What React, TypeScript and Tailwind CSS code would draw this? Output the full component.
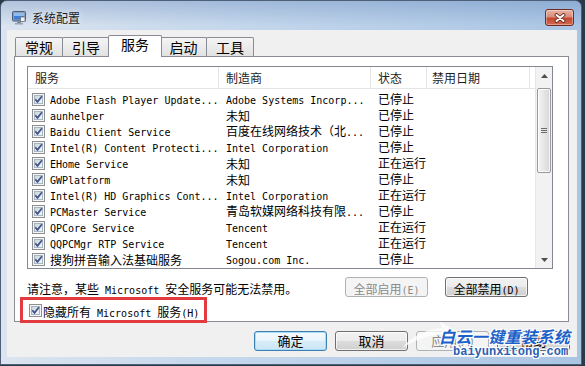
import React from "react";

const ROWS: [string, string, string][] = [
  ["Adobe Flash Player Update...", "Adobe Systems Incorp...", "已停止"],
  ["aunhelper", "未知", "已停止"],
  ["Baidu Client Service", "百度在线网络技术（北...", "已停止"],
  ["Intel(R) Content Protecti...", "Intel Corporation", "已停止"],
  ["EHome Service", "未知", "正在运行"],
  ["GWPlatform", "未知", "已停止"],
  ["Intel(R) HD Graphics Cont...", "Intel Corporation", "正在运行"],
  ["PCMaster Service", "青岛软媒网络科技有限...", "已停止"],
  ["QPCore Service", "Tencent", "正在运行"],
  ["QQPCMgr RTP Service", "Tencent", "正在运行"],
  ["搜狗拼音输入法基础服务", "Sogou.com Inc.", "已停止"],
];

// latin runs in a narrow mono face, CJK runs at 12px
function Mixed({ text }: { text: string }) {
  const parts = text.split(/([\x20-\x7e]+)/).filter(Boolean);
  return (
    <span className="whitespace-pre">
      {parts.map((p, i) =>
        /^[\x20-\x7e]+$/.test(p) ? (
          <span key={i} className="font-['DejaVu_Sans_Mono',monospace] text-[10px]">
            {p}
          </span>
        ) : (
          <span key={i} className="text-[12px]">
            {p}
          </span>
        )
      )}
    </span>
  );
}

function Check() {
  return (
    <svg width="13" height="13" viewBox="0 0 13 13" className="shrink-0">
      <defs>
        <linearGradient id="cbg" x1="0" y1="0" x2="1" y2="1">
          <stop offset="0" stopColor="#c9d2de" />
          <stop offset="1" stopColor="#f6f8fb" />
        </linearGradient>
      </defs>
      <rect x="0.5" y="0.5" width="12" height="12" fill="#f6f6f6" stroke="#8e8f8f" />
      <rect x="2.5" y="2.5" width="8" height="8" fill="url(#cbg)" stroke="#a9b4c2" />
      <path d="M3.3 6.3 L5.5 8.9 L9.9 3.3" fill="none" stroke="#3d5289" strokeWidth="1.7" />
    </svg>
  );
}

function ScrollBar() {
  return (
    <div className="w-[17px] flex flex-col bg-[#f2f2f2] border-l border-[#e6e6e6]">
      <div className="h-[17px] flex items-center justify-center">
        <svg width="7" height="4" viewBox="0 0 7 4">
          <path d="M0 4 L3.5 0 L7 4 Z" fill="#4f4f4f" />
        </svg>
      </div>
      <div className="flex-1 pt-[4px] px-[1px] flex flex-col">
        <div className="h-[85px] rounded-[2px] border border-[#999] bg-[linear-gradient(to_right,#f4f4f4,#e6e6e6_50%,#d6d6d6)] shadow-[inset_0_0_0_1px_rgba(255,255,255,0.8)] flex flex-col items-center justify-center gap-[1px]">
          <div className="w-[6px] h-px bg-[#6b6b6b]" />
          <div className="w-[6px] h-px bg-[#6b6b6b]" />
          <div className="w-[6px] h-px bg-[#6b6b6b]" />
        </div>
      </div>
      <div className="h-[17px] flex items-center justify-center">
        <svg width="7" height="4" viewBox="0 0 7 4">
          <path d="M0 0 L3.5 4 L7 0 Z" fill="#4f4f4f" />
        </svg>
      </div>
    </div>
  );
}

function ServiceList() {
  return (
    <div className="h-[203px] shrink-0 border border-[#828790] bg-white flex">
      <div className="flex-1 flex flex-col min-w-0 overflow-hidden">
        <div className="h-[22px] shrink-0 flex border-b border-[#e5e5e5] text-[12px] text-[#1e1e1e]">
          <div className="w-[191px] pl-[7px] flex items-center border-r border-[#e5e5e5]">服务</div>
          <div className="w-[152px] pl-[7px] flex items-center border-r border-[#e5e5e5]">制造商</div>
          <div className="w-[56px] pl-[7px] flex items-center border-r border-[#e5e5e5]">状态</div>
          <div className="w-[103px] pl-[5px] flex items-center border-r border-[#e5e5e5]">禁用日期</div>
        </div>
        <div className="pt-[2px] flex flex-col">
          {ROWS.map(([name, maker, state]) => (
            <div key={name} className="h-[16px] flex items-center leading-[16px] text-black">
              <div className="w-[191px] pl-[4px] flex items-center gap-[5px] overflow-hidden whitespace-nowrap">
                <Check />
                <Mixed text={name} />
              </div>
              <div className="w-[152px] pl-[7px] overflow-hidden whitespace-nowrap">
                <Mixed text={maker} />
              </div>
              <div className="w-[56px] pl-[7px] text-[12px] whitespace-nowrap">{state}</div>
            </div>
          ))}
        </div>
      </div>
      <ScrollBar />
    </div>
  );
}

const BTN =
  "h-[20px] rounded-[3px] border border-[#707070] bg-[linear-gradient(to_bottom,#f2f2f2_0%,#ebebeb_50%,#dddddd_50%,#cfcfcf_100%)] shadow-[inset_0_0_0_1px_rgba(255,255,255,0.7)] flex items-center justify-center text-black";
const BTN_OFF =
  "h-[20px] rounded-[3px] border border-[#adb2b5] bg-[#f4f4f4] flex items-center justify-center text-[#8a8a8a]";

export default function App() {
  return (
    <div className="relative w-[585px] h-[366px] bg-[#2c3a48] overflow-hidden font-['Noto_Sans_CJK_SC',sans-serif]">
      <div className="w-[582px] h-[365px] flex flex-col rounded-t-[7px] border border-[#4d6078] bg-[linear-gradient(to_right,#dbe4ef_0%,#c4d7ec_40%,#aac5e4_100%)]">
        {/* title bar */}
        <div className="h-[29px] shrink-0 flex items-center pt-[4px] pl-[11px] pr-[7px] rounded-t-[6px] bg-[linear-gradient(to_bottom,rgba(70,110,170,0.28),rgba(255,255,255,0)_85%)]">
          <svg width="14" height="14" viewBox="0 0 14 14" className="shrink-0">
            <rect x="0.5" y="0.5" width="13" height="9.5" rx="1" fill="#8da0b8" stroke="#4a5d78" />
            <rect x="2" y="2" width="10" height="6.5" fill="#3d7fd4" />
            <rect x="2" y="2" width="10" height="3" fill="#8dbdf0" />
            <rect x="5" y="10.5" width="4" height="1.5" fill="#7b8796" />
            <rect x="3" y="12" width="8" height="1.5" fill="#9aa6b4" />
            <rect x="8.5" y="6" width="4.5" height="4.5" fill="#f2f2f2" stroke="#6c7480" strokeWidth="0.8" />
          </svg>
          <span className="ml-[6px] text-[12px] text-[#1b1b1b] [text-shadow:0_0_6px_rgba(255,255,255,0.9)]">系统配置</span>
          <div className="ml-auto w-[29px] h-[17px] rounded-[3px] border border-[#6e2c24] bg-[linear-gradient(to_bottom,#eab2a4_0%,#d98d7c_45%,#c4462f_55%,#d26a51_100%)] shadow-[inset_0_0_0_1px_rgba(255,255,255,0.35)] flex items-center justify-center">
            <svg width="12" height="10" viewBox="0 0 12 10">
              <path d="M2.5 2 L9.5 8 M9.5 2 L2.5 8" stroke="#5b1f16" strokeWidth="3.6" strokeLinecap="round" />
              <path d="M2.5 2 L9.5 8 M9.5 2 L2.5 8" stroke="#ffffff" strokeWidth="2" strokeLinecap="round" />
            </svg>
          </div>
        </div>

        {/* client area */}
        <div className="flex-1 ml-[6px] mr-[4px] mb-[7px] bg-[#f0f0f0] flex flex-col">
          {/* tabs */}
          <div className="h-[26px] shrink-0 flex items-end pl-[8px]">
            <div className="w-[48px] h-[20px] -mb-px rounded-t-[2px] border border-b-0 border-[#898c95] bg-[linear-gradient(to_bottom,#f4f4f4,#e1e1e1)] flex justify-center pt-[1px] text-[14px] leading-[16px]">常规</div>
            <div className="w-[48px] h-[20px] -mb-px -ml-px rounded-t-[2px] border border-b-0 border-[#898c95] bg-[linear-gradient(to_bottom,#f4f4f4,#e1e1e1)] flex justify-center pt-[1px] text-[14px] leading-[16px]">引导</div>
            <div className="relative z-10 w-[54px] h-[22px] -mb-px -ml-[2px] rounded-t-[2px] border border-b-0 border-[#898c95] bg-white flex justify-center text-[14px] leading-[16px]">服务</div>
            <div className="w-[47px] h-[20px] -mb-px -ml-[2px] rounded-t-[2px] border border-b-0 border-[#898c95] bg-[linear-gradient(to_bottom,#f4f4f4,#e1e1e1)] flex justify-center pt-[1px] text-[14px] leading-[16px]">启动</div>
            <div className="w-[48px] h-[20px] -mb-px -ml-px rounded-t-[2px] border border-b-0 border-[#898c95] bg-[linear-gradient(to_bottom,#f4f4f4,#e1e1e1)] flex justify-center pt-[1px] text-[14px] leading-[16px]">工具</div>
          </div>

          {/* tab panel */}
          <div className="ml-[7px] mr-[8px] h-[266px] shrink-0 border border-[#898c95] bg-white pt-[9px] pl-[12px] pr-[15px] flex flex-col">
            <ServiceList />
            <div className="mt-[8px] h-[20px] flex items-center justify-between">
              <Mixed text="请注意，某些 Microsoft 安全服务可能无法禁用。" />
              <div className="flex gap-[17px] pr-[25px]">
                <div className={BTN_OFF + " w-[83px]"}>
                  <Mixed text="全部启用(E)" />
                </div>
                <div className={BTN + " w-[83px]"}>
                  <Mixed text="全部禁用(D)" />
                </div>
              </div>
            </div>
            <div className="mt-[6px] h-[14px] flex items-center gap-[1px] pl-[2px]">
              <Check />
              <Mixed text="隐藏所有 Microsoft 服务(H)" />
            </div>
          </div>

          {/* dialog buttons */}
          <div className="mt-[9px] h-[20px] flex justify-end gap-[8px] pr-[7px] text-[13px]">
            <div className="w-[73px] h-[20px] rounded-[3px] border border-[#3c7fb1] bg-[linear-gradient(to_bottom,#f4fafe_0%,#e8f4fb_50%,#d8ecf8_50%,#cbe5f5_100%)] shadow-[inset_0_0_0_1px_#a9dcf6] flex items-center justify-center text-black">确定</div>
            <div className={BTN + " w-[73px]"}>取消</div>
            <div className={BTN_OFF + " w-[73px]"}>应用(A)</div>
            <div className={BTN + " w-[73px]"}>帮助</div>
          </div>
        </div>
      </div>

      {/* annotation box */}
      <div className="absolute left-[20px] top-[297px] w-[187px] h-[26px] border-[3px] border-[#e23b3f]" />

      {/* watermark */}
      <svg className="absolute left-[398px] top-[318px]" width="60" height="34" viewBox="0 0 60 34">
        <path d="M4 30 C14 18 26 12 44 10 L42 4 L58 13 L44 22 L44 16 C30 17 18 22 4 30 Z" fill="rgba(255,255,255,0.75)" />
      </svg>
      <div className="absolute left-[439px] top-[328px] text-[16px] leading-[17px] font-bold italic tracking-[0.4px] text-[#1c61c9] [text-shadow:1px_1px_0_#fff,-1px_-1px_0_#fff,1px_-1px_0_#fff,-1px_1px_0_#fff]">
        白云一键重装系统
      </div>
      <div className="absolute left-[453px] top-[346px] font-['Liberation_Mono',monospace] text-[12px] leading-[12px] font-bold text-[#2d5fb2] [text-shadow:1px_1px_0_#fff,-1px_-1px_0_#fff,1px_-1px_0_#fff,-1px_1px_0_#fff]">
        baiyunxitong.com
      </div>
    </div>
  );
}
